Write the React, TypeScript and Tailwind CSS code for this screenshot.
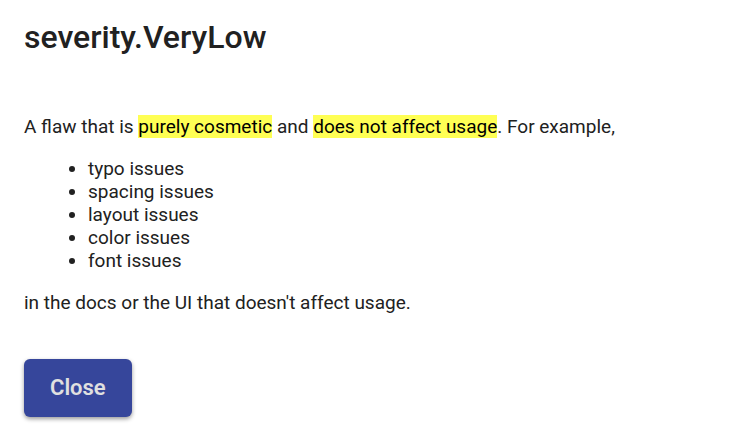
const issues = ["typo issues", "spacing issues", "layout issues", "color issues", "font issues"];

export default function App() {
  return (
    <main className="min-h-screen bg-white px-6 pt-[19px] pb-4 font-[Roboto,sans-serif] text-[19px] leading-[23px] text-[#212121]">
      <h1 className="text-[32px] leading-9 font-medium">severity.VeryLow</h1>
      <div className="mt-15">
        <p>
          A flaw that is <mark className="bg-[#ffff54] text-black">purely cosmetic</mark> and{" "}
          <mark className="bg-[#ffff54] text-black">does not affect usage</mark>. For example,
        </p>
        <ul className="my-[19px] list-disc pl-16">
          {issues.map((issue) => (
            <li key={issue}>{issue}</li>
          ))}
        </ul>
        <p>in the docs or the UI that doesn't affect usage.</p>
      </div>
      <button
        type="button"
        className="mt-[45px] rounded-md bg-[#36469b] px-[26px] py-[17px] text-[22px] leading-6 font-semibold text-[#e0e0e0] shadow-[0_2px_4px_rgba(0,0,0,0.4)]"
      >
        Close
      </button>
    </main>
  );
}
